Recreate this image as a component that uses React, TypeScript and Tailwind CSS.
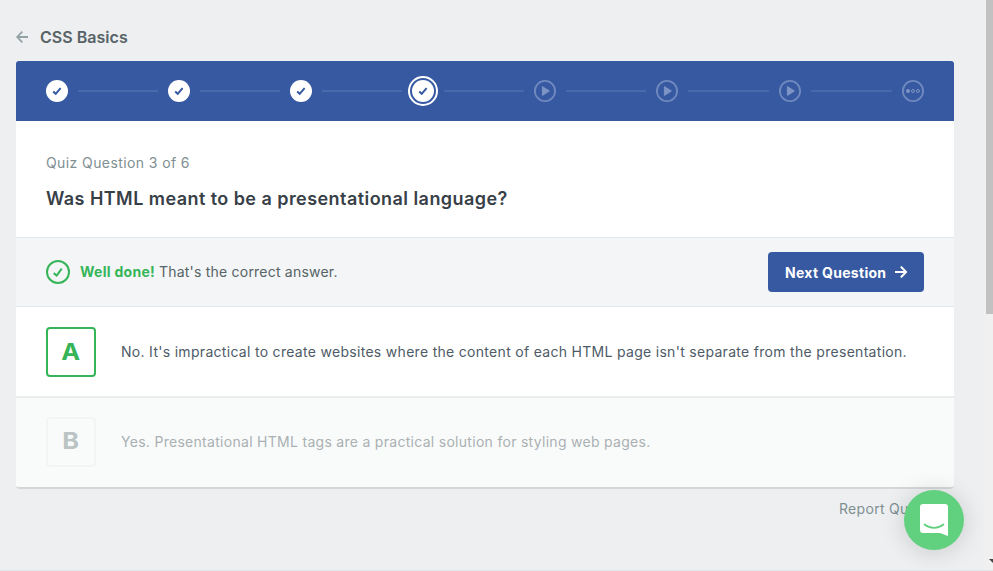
import React from "react";

type StepKind = "done" | "current" | "video" | "quiz";

const steps: StepKind[] = ["done", "done", "done", "current", "video", "video", "video", "quiz"];

function Check() {
  return <path d="M7.2 11.6 L9.7 13.8 L14.6 8.2" fill="none" stroke="#3659a2" strokeWidth="2" />;
}

function StepIcon({ kind }: { kind: StepKind }) {
  return (
    <svg viewBox="0 0 22 22" className="block size-[22px] shrink-0 overflow-visible">
      {(kind === "done" || kind === "current") && (
        <>
          <circle cx="11" cy="11" r="11" fill="#fff" />
          {kind === "current" && <circle cx="11" cy="11" r="14" fill="none" stroke="#fff" strokeWidth="2" />}
          <Check />
        </>
      )}
      {kind === "video" && (
        <>
          <circle cx="11" cy="11" r="10.1" fill="none" stroke="#7089be" strokeWidth="1.8" />
          <path d="M8.4 6.6 L15.4 11 L8.4 15.4 Z" fill="#7d94c4" stroke="#7d94c4" strokeWidth="1" strokeLinejoin="round" />
        </>
      )}
      {kind === "quiz" && (
        <>
          <circle cx="11" cy="11" r="10.1" fill="none" stroke="#7089be" strokeWidth="1.8" />
          <circle cx="6" cy="11" r="2" fill="#7d94c4" />
          <circle cx="11" cy="11" r="1.5" fill="none" stroke="#7d94c4" />
          <circle cx="16" cy="11" r="1.5" fill="none" stroke="#7d94c4" />
        </>
      )}
    </svg>
  );
}

function Progress() {
  return (
    <div className="flex h-[60px] items-center rounded-t-[3px] bg-[#3659a2] px-[30px]">
      {steps.map((kind, i) => (
        <React.Fragment key={i}>
          {i > 0 && <div className={`mx-[10px] h-[2px] bg-[#4a69ab] ${i > 5 ? "flex-1" : "w-20"}`} />}
          <StepIcon kind={kind} />
        </React.Fragment>
      ))}
    </div>
  );
}

export default function App() {
  return (
    <div className="relative flex h-[571px] w-[993px] overflow-hidden bg-[#edeff1] font-['Inter','Liberation_Sans',sans-serif]">
      <main className="w-[984px] pl-4 pr-[30px]">
        <header className="flex h-[61px] items-center pt-[12px]">
          <svg viewBox="0 0 12 12" className="mr-3 size-3" fill="none" stroke="#92a2a5" strokeWidth="1.8">
            <path d="M12 6H1.4M6.3 .7L1.2 6l5.1 5.3" />
          </svg>
          <h1 className="whitespace-nowrap text-[16px] leading-6 font-semibold tracking-[0.03px] text-[#576366]">CSS Basics</h1>
        </header>

        <section className="h-[428px] rounded-[4px] border-b-2 border-[#d4d7d9] bg-white">
          <Progress />
          <div className="h-[116px] px-[30px] pt-8">
            <p className="whitespace-nowrap text-[14px] leading-5 tracking-[0.4px] text-[#7f8f92]">Quiz Question 3 of 6</p>
            <h2 className="mt-[14px] whitespace-nowrap text-[18px] leading-6 font-semibold tracking-[0.445px] text-[#384047]">
              Was HTML meant to be a presentational language?
            </h2>
          </div>

          <div className="flex h-[70px] items-center border-y border-[#e3e6e8] bg-[#f3f5f7] px-[30px]">
            <svg viewBox="0 0 24 24" className="size-6" fill="none" stroke="#35b558" strokeWidth="2">
              <circle cx="12" cy="12" r="11" />
              <path d="M7.7 13.1l3 2.4 5-6.8" />
            </svg>
            <p className="ml-[10px] whitespace-nowrap pb-px text-[14px] leading-5 text-[#576366]">
              <strong className="font-bold tracking-[0.28px] text-[#35b558]">Well done!</strong>{" "}
              <span className="tracking-[0.21px]">That's the correct answer.</span>
            </p>
            <button className="ml-auto flex h-10 w-[156px] items-center rounded-[4px] bg-[#3659a2] pl-[17px] text-[14px] font-bold text-white">
              <span className="whitespace-nowrap tracking-[0.3px]">Next Question</span>
              <svg viewBox="0 0 12 12" className="ml-auto mr-[17px] size-3" fill="none" stroke="#fff" strokeWidth="2">
                <path d="M0 6h10.7M5.8 .6L11 6l-5.2 5.4" />
              </svg>
            </button>
          </div>

          <div className="flex h-[91px] items-center border-b-2 border-[#ebeded] px-[30px] pt-px">
            <div className="flex size-[50px] items-center justify-center rounded-[4px] border-2 border-[#35b558] text-[23px] font-bold text-[#35b558]">
              <span className="scale-x-110">A</span>
            </div>
            <p className="ml-[25px] whitespace-nowrap pb-px text-[14px] leading-5 tracking-[0.3px] text-[#4e5b67]">
              No. It's impractical to create websites where the content of each HTML page isn't separate from the presentation.
            </p>
          </div>

          <div className="flex h-[89px] items-center rounded-b-[3px] bg-[#f9fbfa] px-[30px] pb-[2px]">
            <div className="flex size-[50px] items-center justify-center rounded-[4px] border-2 border-[#f3f5f5] text-[23px] font-bold text-[#bbc3c5]">
              <span className="scale-x-110">B</span>
            </div>
            <p className="ml-[25px] whitespace-nowrap text-[14px] leading-5 tracking-[0.29px] text-[#aab0b3]">
              Yes. Presentational HTML tags are a practical solution for styling web pages.
            </p>
          </div>
        </section>

        <footer className="flex h-[82px] justify-end pt-[10px]">
          <a className="w-[115px] whitespace-nowrap text-[14px] leading-5 tracking-[0.3px] text-[#7f8f92]">Report Question</a>
        </footer>
      </main>

      <aside className="flex w-[9px] flex-col items-end justify-between bg-[#f0f0f0]">
        <div className="h-[314px] w-[7px] bg-[#c1c1c1]" />
        <svg viewBox="0 0 4 5" className="mb-2 h-[5px] w-1" fill="#444">
          <path d="M0 1h4v4z" />
        </svg>
      </aside>

      <button className="absolute left-[904px] top-[490px] flex size-[60px] items-center justify-center rounded-full bg-[#61d17f] shadow-[0_2px_24px_rgba(0,0,0,0.16)]">
        <svg viewBox="0 0 28 32" className="h-8 w-7">
          <path d="M3 0h22a3 3 0 0 1 3 3v29l-8-3H3a3 3 0 0 1-3-3V3a3 3 0 0 1 3-3z" fill="#fff" />
          <path d="M4.5 20.5c5.5 4.4 13.5 4.4 19 0" fill="none" stroke="#61d17f" strokeWidth="1.7" strokeLinecap="round" />
        </svg>
      </button>
      <div className="absolute bottom-0 left-0 h-px w-full bg-[#e2e5e8]" />
    </div>
  );
}
